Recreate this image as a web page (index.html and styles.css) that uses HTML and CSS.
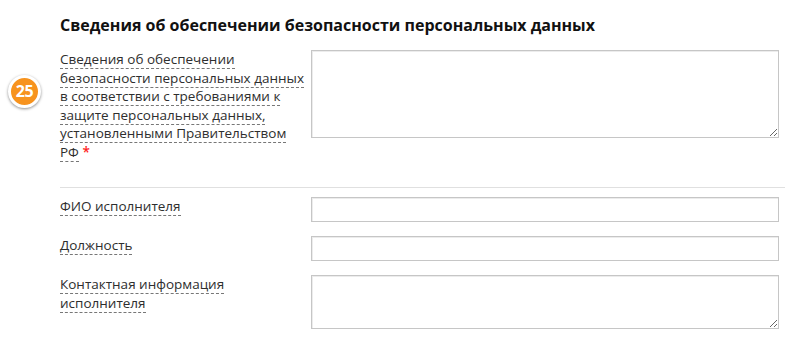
FILE: index.html
```html
<!DOCTYPE html>
<html lang="ru">
<head>
<meta charset="utf-8">
<link rel="stylesheet" href="styles.css">
</head>
<body>
<div class="section">
  <h2 class="section-title">Сведения об обеспечении безопасности персональных данных</h2>
  <div class="row row-first">
    <span class="badge">25</span>
    <label class="label"><span class="label-text">Сведения об обеспечении безопасности персональных данных в соответствии с требованиями к защите персональных данных, установленными Правительством РФ</span> <span class="req">*</span></label>
    <textarea class="field area-big"></textarea>
  </div>
  <hr class="sep">
  <div class="row">
    <label class="label"><span class="label-text">ФИО исполнителя</span></label>
    <input class="field input" type="text">
  </div>
  <div class="row">
    <label class="label"><span class="label-text">Должность</span></label>
    <input class="field input" type="text">
  </div>
  <div class="row">
    <label class="label"><span class="label-text">Контактная информация исполнителя</span></label>
    <textarea class="field area-small"></textarea>
  </div>
</div>
</body>
</html>
```

FILE: styles.css
```css
html, body {
  margin: 0;
  padding: 0;
  background: #fff;
}
body {
  font-family: "Open Sans", "Liberation Sans", sans-serif;
  color: #333;
}
.section {
  padding: 14px 16px 0 60px;
}
.section-title {
  margin: 0 0 14px 0;
  font-size: 16px;
  line-height: 22px;
  font-weight: 700;
  color: #111;
}
.row {
  position: relative;
  display: flex;
  align-items: flex-start;
  margin-bottom: 14px;
}
.row-first {
  margin-bottom: 26px;
}
.label {
  width: 245px;
  margin-right: 6px;
  flex: none;
  font-size: 13.5px;
  line-height: 18.5px;
  color: #2e2e2e;
}
.label-text {
  border-bottom: 1px dashed #777;
}
.req {
  color: #f22;
  font-weight: 600;
}
.field {
  box-sizing: border-box;
  width: 468px;
  margin: 0;
  border: 1px solid #c6c6c6;
  box-shadow: inset 1px 1px 0 #ececec;
  background: #fff;
  font-family: inherit;
  font-size: 13px;
  outline: none;
  display: block;
}
.area-big {
  height: 88px;
}
.input {
  height: 25px;
}
.area-small {
  height: 54px;
}
.sep {
  border: 0;
  border-top: 1px solid #e0e0e0;
  margin: 0 0 9px 0;
  width: 725px;
}
.badge {
  position: absolute;
  left: -52px;
  top: 25px;
  width: 27px;
  height: 27px;
  border-radius: 50%;
  background: #f7931e;
  border: 3px solid #fff;
  box-shadow: 0 1px 3px rgba(0,0,0,0.45);
  color: #fff;
  font-weight: 700;
  font-size: 16px;
  line-height: 27px;
  text-align: center;
  letter-spacing: -0.5px;
}
```
